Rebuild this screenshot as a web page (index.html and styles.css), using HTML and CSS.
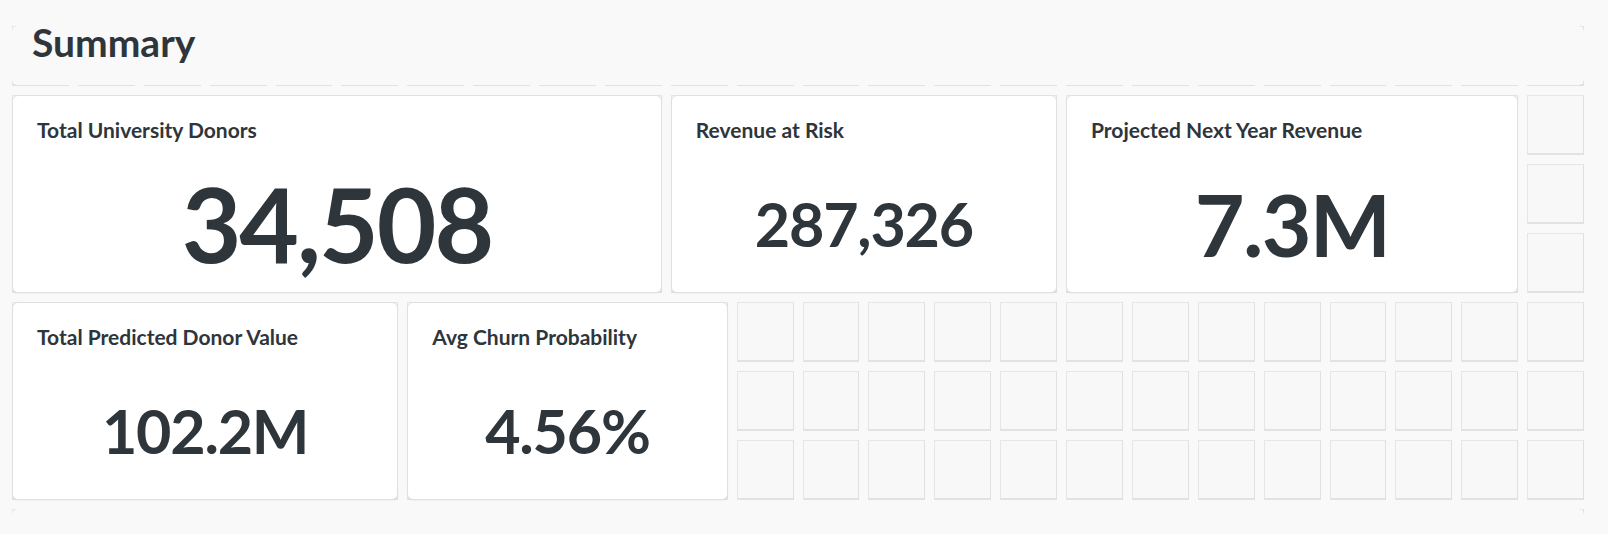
FILE: index.html
```html
<!DOCTYPE html>
<html lang="en">

<head>
    <meta charset="UTF-8">
    <meta name="viewport" content="width=device-width, initial-scale=1.0">
    <title>Summary</title>

    <link rel="stylesheet" href="styles.css">
</head>

<body>
    <div class="board">
        <div class="cells" id="cells"></div>

        <div class="cards">
            <div class="heading">
                <h1>Summary</h1>
            </div>

            <div class="card donors">
                <div class="card-title">Total University Donors</div>
                <div class="card-value xl">34,508</div>
            </div>
            <div class="card risk">
                <div class="card-title">Revenue at Risk</div>
                <div class="card-value md">287,326</div>
            </div>
            <div class="card projected">
                <div class="card-title">Projected Next Year Revenue</div>
                <div class="card-value lg">7.3M</div>
            </div>
            <div class="card predicted">
                <div class="card-title">Total Predicted Donor Value</div>
                <div class="card-value md">102.2M</div>
            </div>
            <div class="card churn">
                <div class="card-title">Avg Churn Probability</div>
                <div class="card-value md">4.56%</div>
            </div>

            <div class="heading next"></div>
        </div>
    </div>

    <script>
        // empty grid slots behind the cards, 24 columns x 8 rows
        let cells = document.querySelector('#cells');
        for (let i = 0; i < 24 * 8; i++) {
            let cell = document.createElement('div');
            cell.className = 'cell';
            cells.appendChild(cell);
        }
    </script>
</body>

</html>
```

FILE: styles.css
```css
* {
    margin: 0;
    padding: 0;
    box-sizing: border-box;
}

body {
    background: #f9f9f9;
    font-family: Lato, "Open Sans", sans-serif;
    color: #2e353b;
}

.board {
    display: grid;
    align-content: start;
    height: 534px;
    overflow: hidden;
    padding: 26px 24px 0 12px;
}

/* both layers share the same single grid area */
.cells,
.cards {
    grid-area: 1 / 1;
    display: grid;
    grid-template-columns: repeat(24, 1fr);
    grid-auto-rows: 60px;
    gap: 9px;
}

.cell {
    background: #f8f8f8;
    border: 1px solid #e6e6e6;
    border-right-color: #e0e0e0;
    border-bottom: 2px solid #e2e2e2;
}

.heading {
    grid-row: 1;
    grid-column: 1 / -1;
    background: #f9f9f9;
    border-radius: 6px;
    margin-bottom: 1px;
}

.heading h1 {
    font-size: 39px;
    font-weight: 700;
    line-height: 44px;
    padding-left: 20px;
    margin-top: -6px;
}

.heading.next {
    grid-row: 8;
    margin: 0;
}

.card {
    display: flex;
    flex-direction: column;
    background: #fff;
    border: 1px solid #e0e0e0;
    border-radius: 6px;
    box-shadow: 0 1px 2px rgba(0, 0, 0, 0.04);
    padding: 21px 24px 0;
}

.donors {
    grid-row: 2 / span 3;
    grid-column: 1 / span 10;
}

.risk {
    grid-row: 2 / span 3;
    grid-column: 11 / span 6;
}

.projected {
    grid-row: 2 / span 3;
    grid-column: 17 / span 7;
}

.predicted {
    grid-row: 5 / span 3;
    grid-column: 1 / span 6;
}

.churn {
    grid-row: 5 / span 3;
    grid-column: 7 / span 5;
}

.card-title {
    font-size: 21px;
    font-weight: 700;
    margin-bottom: 17px;
}

.card-value {
    flex: 1;
    display: flex;
    align-items: center;
    justify-content: center;
    font-weight: 700;
    line-height: 1;
    letter-spacing: -0.02em;
    padding-bottom: 4px;
}

.card-value.xl {
    font-size: 103px;
}

.card-value.lg {
    font-size: 86px;
}

.card-value.md {
    font-size: 61px;
}
```
